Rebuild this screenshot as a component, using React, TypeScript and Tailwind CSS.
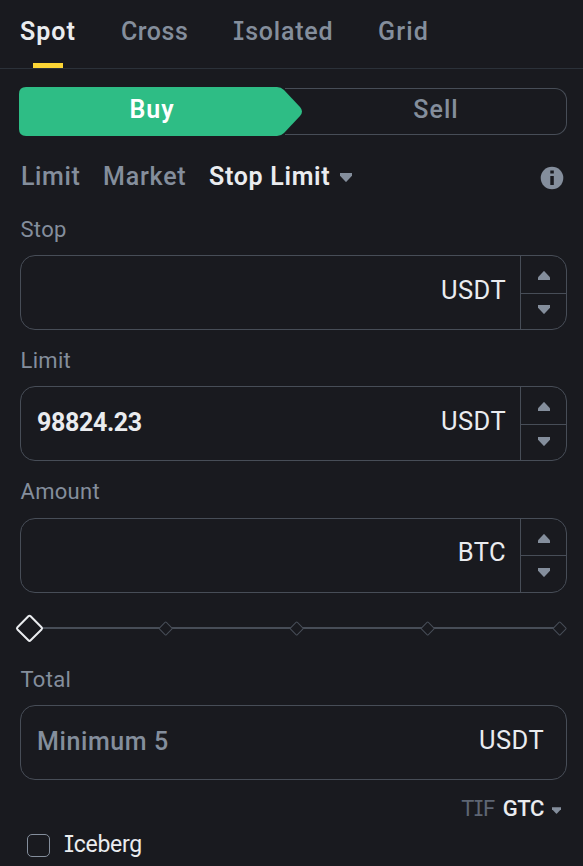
import type { ReactNode } from "react";

function Triangle({ up = false, className = "" }: { up?: boolean; className?: string }) {
  return (
    <svg viewBox="0 0 12 9" className={`block h-[9px] w-3 shrink-0 ${className}`} fill="#848e9c">
      <path d={up ? "M0 9V6.2L5.4 0.4Q6 -0.2 6.6 0.4L12 6.2V9Z" : "M0 0V2.8L5.4 8.6Q6 9.2 6.6 8.6L12 2.8V0Z"} />
    </svg>
  );
}

/* Capital I with slab serifs */
function SerifI() {
  return <span className="font-['Inter'] leading-none [font-feature-settings:'cv08','ss02']">I</span>;
}

type FieldProps = { children?: ReactNode; unit: string; stepper?: boolean; topClass?: string; arrowClass?: string; unitClass?: string };

function Field({ children, unit, stepper = true, topClass = "h-[38px]", arrowClass = "pt-[11px]", unitClass = "pb-[5px]" }: FieldProps) {
  return (
    <div className="flex h-[75px] rounded-[15px] border border-[#474d57]">
      <div className="flex flex-1 items-center justify-between pl-4 pr-[14px]">
        <div className="pb-0.5 text-[25px] leading-8">{children}</div>
        <div className={`text-[25.5px] leading-8 tracking-[0.4px] text-[#eaecef] ${unitClass} ${stepper ? "" : "mr-2"}`}>{unit}</div>
      </div>
      {stepper && (
        <div className="flex w-[46px] flex-col border-l border-[#474d57]">
          <div className={`flex justify-center border-b border-[#474d57] pt-[15px] ${topClass}`}>
            <Triangle up />
          </div>
          <div className={`flex flex-1 justify-center ${arrowClass}`}>
            <Triangle />
          </div>
        </div>
      )}
    </div>
  );
}

function Label({ children }: { children: ReactNode }) {
  return <div className="h-[26px] pl-[0.5px] text-[22px] leading-[26px] tracking-[0.3px] text-[#848e9c]">{children}</div>;
}

function Slider() {
  return (
    <svg viewBox="0 0 553 30" className="-ml-1.5 block h-[30px] w-[553px] overflow-visible" fill="#191a1f">
      <path d="M28 15H545" stroke="#474d57" strokeWidth="2" />
      {[151.7, 282.7, 413.7, 545.7].map((x) => (
        <rect key={x} x={x - 4.8} y="10.7" width="9.6" height="9.6" rx="1" stroke="#474d57" strokeWidth="1" transform={`rotate(45 ${x} 15.5)`} />
      ))}
      <rect x="6.2" y="6" width="18.6" height="18.6" rx="1.6" stroke="#eaecef" strokeWidth="2" transform="rotate(45 15.5 15.3)" />
    </svg>
  );
}

export default function App() {
  return (
    <main className="h-[866px] w-[583px] overflow-hidden bg-[#191a1f] font-['Roboto','Liberation_Sans',sans-serif] text-[#848e9c]">
      <nav className="flex h-[69px] border-b border-[#2b3139] pl-5 text-[25px] font-medium leading-8">
        <div className="flex w-[101px] flex-col">
          <span className="mt-4 font-semibold tracking-[1px] text-[#eaecef]">Spot</span>
          <span className="ml-[13px] mt-[15px] h-[5px] w-[30px] bg-[#fcd535]" />
        </div>
        <span className="mt-4 w-[112px] tracking-[0.5px]">Cross</span>
        <span className="mt-4 w-[145px] tracking-[0.8px]"><SerifI />solated</span>
        <span className="mt-4 tracking-[1.2px]">Grid</span>
      </nav>

      <div className="mt-[18px] flex h-[49px] pl-[19px] text-[25px] font-medium">
        <button className="relative h-[49px] w-[266px] text-white">
          <svg viewBox="0 0 283 49" className="absolute left-0 top-0 h-[49px] w-[283px]" fill="#2ebd85">
            <path d="M7 0H258Q262 0 265 3L281 20Q285 24.5 281 29L265 46Q262 49 258 49H7Q0 49 0 42V7Q0 0 7 0Z" />
          </svg>
          <span className="relative block h-[49px] pt-[7px] font-semibold leading-8 tracking-[1px]">Buy</span>
        </button>
        <button className="mt-px h-[47px] w-[282px] rounded-r-[12px] border border-l-0 border-[#474d57] pb-1 pl-[21px] leading-8 tracking-[1px]">Sell</button>
      </div>

      <div className="mt-[25px] flex h-8 items-center pl-[21px] text-[25px] font-medium leading-8">
        <span className="w-[82px] tracking-[0.6px]">Limit</span>
        <span className="w-[106px] tracking-[0.8px]">Market</span>
        <span className="w-[131px] font-semibold tracking-[0.7px] text-[#eaecef]">Stop Limit</span>
        <Triangle className="mt-px" />
        <svg viewBox="0 0 24 24" className="ml-auto mr-[19px] mt-[2px] h-6 w-6">
          <circle cx="12" cy="12" r="11.3" fill="#848e9c" />
          <path d="M10.3 4.5h3.5v3h-3.5zM10.3 10h3.5v9h-3.5z" fill="#191a1f" />
        </svg>
      </div>

      <div className="pl-5 pr-4 pt-6">
        <Label>Stop</Label>
        <div className="mt-[12px]"><Field unit="USDT" /></div>
        <div className="mt-[18px]"><Label>Limit</Label></div>
        <div className="mt-[12px]">
          <Field unit="USDT" arrowClass="pt-[12px]"><span className="font-bold tracking-[-0.35px] text-[#eaecef]">98824.23</span></Field>
        </div>
        <div className="mt-[18px]"><Label>Amount</Label></div>
        <div className="mt-[13px]"><Field unit="BTC" unitClass="pb-[7px]" topClass="h-[37px]" arrowClass="pt-[12px]" /></div>
        <div className="mt-[20px]"><Slider /></div>
        <div className="mt-[24px]"><Label>Total</Label></div>
        <div className="mt-[12px]">
          <Field unit="USDT" stepper={false}><span className="font-medium tracking-[0.6px]">Minimum 5</span></Field>
        </div>
        <div className="mt-4 flex h-[26px] items-center justify-end pr-[6px] text-[22px] leading-[26px]">
          <span className="tracking-[-0.5px] text-[#5e6673]">T<SerifI />F</span>
          <span className="ml-2 font-medium tracking-[-0.4px] text-[#eaecef]">GTC</span>
          <Triangle className="ml-2 mt-0.5 !h-[7px] !w-[9px]" />
        </div>
        <div className="ml-[7px] mt-[9px] flex h-[28px] items-center">
          <span className="mt-px h-[23px] w-[23px] rounded-[5px] border border-[#848e9c]" />
          <span className="ml-3.5 text-[23px] leading-7 tracking-[-0.3px] text-[#eaecef]"><SerifI />ceberg</span>
        </div>
      </div>
    </main>
  );
}
